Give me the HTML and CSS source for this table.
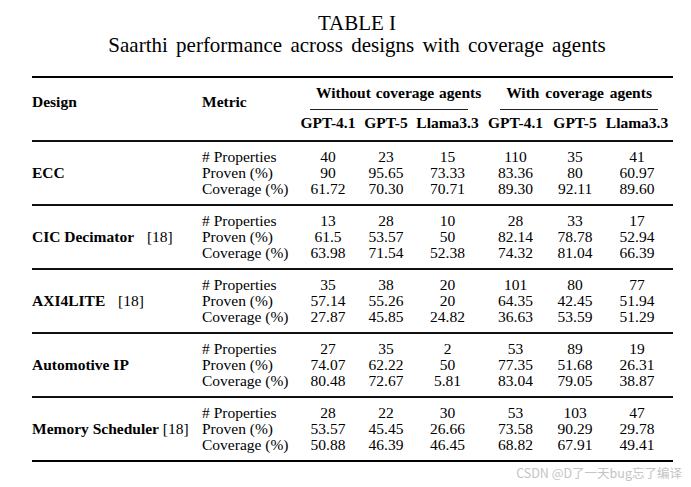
FILE: index.html
```html
<!DOCTYPE html>
<html lang="en">
<head>
<meta charset="utf-8">
<title>TABLE I</title>
<link rel="stylesheet" href="styles.css">
</head>
<body>
<div class="page">
  <div class="caption">
    <div class="cap-title">TABLE I</div>
    <div class="cap-sub">Saarthi performance across designs with coverage agents</div>
  </div>
  <table class="results">
    <colgroup>
      <col class="c-design">
      <col class="c-metric">
      <col class="c-a1">
      <col class="c-a2">
      <col class="c-a3">
      <col class="c-b1">
      <col class="c-b2">
      <col class="c-b3">
    </colgroup>
    <thead>
      <tr>
        <th rowspan="2" class="h-side">Design</th>
        <th rowspan="2" class="h-side">Metric</th>
        <th colspan="3" class="h-group"><div class="group-label g-without">Without coverage agents</div></th>
        <th colspan="3" class="h-group"><div class="group-label g-with">With coverage agents</div></th>
      </tr>
      <tr>
        <th class="h-model">GPT-4.1</th>
        <th class="h-model">GPT-5</th>
        <th class="h-model">Llama3.3</th>
        <th class="h-model">GPT-4.1</th>
        <th class="h-model">GPT-5</th>
        <th class="h-model last">Llama3.3</th>
      </tr>
    </thead>
    <tbody>
      <tr>
        <td class="design"><b>ECC</b></td>
        <td class="metric"># Properties<br>Proven (%)<br>Coverage (%)</td>
        <td class="num">40<br>90<br>61.72</td>
        <td class="num">23<br>95.65<br>70.30</td>
        <td class="num">15<br>73.33<br>70.71</td>
        <td class="num">110<br>83.36<br>89.30</td>
        <td class="num">35<br>80<br>92.11</td>
        <td class="num last">41<br>60.97<br>89.60</td>
      </tr>
      <tr>
        <td class="design"><b>CIC Decimator</b> <span class="cite wide">[18]</span></td>
        <td class="metric"># Properties<br>Proven (%)<br>Coverage (%)</td>
        <td class="num">13<br>61.5<br>63.98</td>
        <td class="num">28<br>53.57<br>71.54</td>
        <td class="num">10<br>50<br>52.38</td>
        <td class="num">28<br>82.14<br>74.32</td>
        <td class="num">33<br>78.78<br>81.04</td>
        <td class="num last">17<br>52.94<br>66.39</td>
      </tr>
      <tr>
        <td class="design"><b>AXI4LITE</b> <span class="cite wide">[18]</span></td>
        <td class="metric"># Properties<br>Proven (%)<br>Coverage (%)</td>
        <td class="num">35<br>57.14<br>27.87</td>
        <td class="num">38<br>55.26<br>45.85</td>
        <td class="num">20<br>20<br>24.82</td>
        <td class="num">101<br>64.35<br>36.63</td>
        <td class="num">80<br>42.45<br>53.59</td>
        <td class="num last">77<br>51.94<br>51.29</td>
      </tr>
      <tr>
        <td class="design"><b>Automotive IP</b></td>
        <td class="metric"># Properties<br>Proven (%)<br>Coverage (%)</td>
        <td class="num">27<br>74.07<br>80.48</td>
        <td class="num">35<br>62.22<br>72.67</td>
        <td class="num">2<br>50<br>5.81</td>
        <td class="num">53<br>77.35<br>83.04</td>
        <td class="num">89<br>51.68<br>79.05</td>
        <td class="num last">19<br>26.31<br>38.87</td>
      </tr>
      <tr class="final">
        <td class="design"><b>Memory Scheduler</b> <span class="cite">[18]</span></td>
        <td class="metric"># Properties<br>Proven (%)<br>Coverage (%)</td>
        <td class="num">28<br>53.57<br>50.88</td>
        <td class="num">22<br>45.45<br>46.39</td>
        <td class="num">30<br>26.66<br>46.45</td>
        <td class="num">53<br>73.58<br>68.82</td>
        <td class="num">103<br>90.29<br>67.91</td>
        <td class="num last">47<br>29.78<br>49.41</td>
      </tr>
    </tbody>
  </table>
  <div class="watermark">CSDN @D了一天bug忘了编译</div>
</div>
</body>
</html>
```

FILE: styles.css
```css
html, body {
  margin: 0;
  padding: 0;
  background: #ffffff;
}

.page {
  position: relative;
  width: 691px;
  height: 487px;
  padding: 12px 0 0 32px;
  box-sizing: border-box;
  font-family: "Liberation Serif", "Times New Roman", serif;
  color: #000;
}

.caption {
  width: 641px;
  padding-left: 9px;
  box-sizing: border-box;
  text-align: center;
  font-size: 21px;
  line-height: 22px;
  margin-bottom: 20px;
}

.cap-sub {
  word-spacing: 3px;
}

.results {
  width: 641px;
  table-layout: fixed;
  border-collapse: separate;
  border-spacing: 0;
  font-size: 15.5px;
  line-height: 16px;
}

.c-design { width: 170px; }
.c-metric { width: 98px; }
.c-a1 { width: 56px; }
.c-a2 { width: 60px; }
.c-a3 { width: 63px; }
.c-b1 { width: 73px; }
.c-b2 { width: 46px; }
.c-b3 { width: 75px; }

th, td {
  padding: 0;
  white-space: nowrap;
}

thead th {
  font-weight: bold;
}

.h-side {
  text-align: left;
  vertical-align: top;
  padding-top: 16px;
  border-top: 2px solid #000;
  border-bottom: 2px solid #111;
}

.h-group {
  text-align: center;
  vertical-align: top;
  padding-top: 7px;
  border-top: 2px solid #000;
}

.group-label {
  padding-bottom: 8px;
  border-bottom: 1px solid #222;
  word-spacing: 2px;
}

.g-without {
  margin: 0 11px 0 10px;
  padding-left: 6px;
  word-spacing: 1px;
}

.g-with {
  margin: 0 15px 0 21px;
}

.h-model {
  text-align: center;
  padding: 5px 0 9px;
  border-bottom: 2px solid #111;
}

.h-model.last,
.num.last {
  padding-left: 3px;
}

tbody td {
  padding-top: 7px;
  padding-bottom: 7px;
  border-bottom: 2px solid #111;
}

tbody tr.final td {
  border-bottom-color: #000;
}

.design {
  vertical-align: middle;
  text-align: left;
}

.cite {
  font-weight: normal;
}

.cite.wide {
  margin-left: 9px;
}

.metric {
  text-align: left;
  vertical-align: top;
}

.num {
  text-align: center;
  vertical-align: top;
}

.watermark {
  position: absolute;
  right: 9px;
  top: 465px;
  font-family: "Noto Sans CJK SC", "Noto Sans", sans-serif;
  font-size: 12.5px;
  line-height: 16px;
  color: #c4c4c4;
}
```
